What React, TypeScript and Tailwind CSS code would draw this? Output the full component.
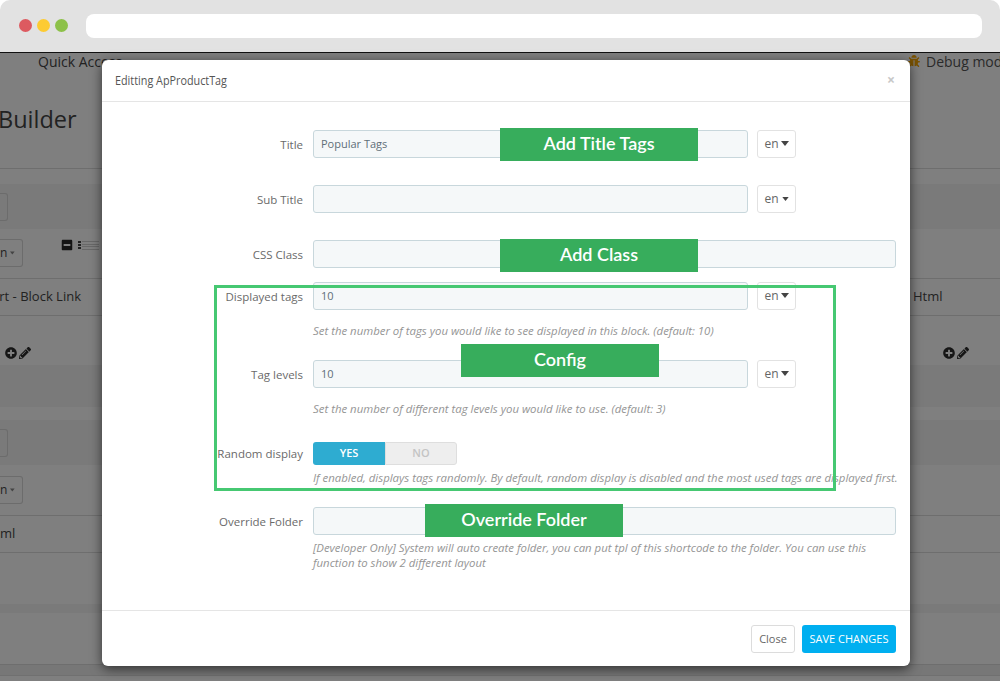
import React from 'react';
import { FaBug, FaMinusSquare, FaPencilAlt, FaPlusCircle } from 'react-icons/fa';

const Caret = ({ big = false }: { big?: boolean }) => (
  <svg width={big ? 8 : 7} height={big ? 5 : 4} viewBox="0 0 8 5" className={big ? 'mb-[2px] ml-[2px]' : 'ml-[3px]'}>
    <path d="M0 0h8L4 5z" fill="#444" />
  </svg>
);

const LangButton = ({ big = false }: { big?: boolean }) => (
  <button className="ml-[9px] flex h-[28px] w-[39px] shrink-0 items-center justify-center rounded-[3px] border border-[#e2e2e2] bg-white text-[12px] text-[#666]">
    en
    <Caret big={big} />
  </button>
);

const Field = ({
  label,
  value,
  wide = false,
  lang,
  className = '',
}: {
  label: string;
  value?: string;
  wide?: boolean;
  lang?: 'big' | 'small';
  className?: string;
}) => (
  <div className={`flex items-center ${className}`}>
    <label className="w-[201px] shrink-0 pt-[1px] text-right text-[11.5px] text-[#6a6a6a]">{label}</label>
    <div className="ml-[10px] flex">
      <div
        className={`flex h-[28px] items-center rounded-[3px] border border-[#c8d7dc] bg-[#f5f8f9] pl-[7px] text-[11px] text-[#5f6f78] ${
          wide ? 'w-[583px]' : 'w-[435px]'
        }`}
      >
        {value}
      </div>
      {lang && <LangButton big={lang === 'big'} />}
    </div>
  </div>
);

const Help = ({ children, className = '' }: { children: React.ReactNode; className?: string }) => (
  <p className={`ml-[211px] text-[11.4px] italic leading-[15px] text-[#959595] ${className}`}>{children}</p>
);

const Note = ({ text, className }: { text: string; className: string }) => (
  <div
    className={`absolute flex h-[33px] w-[198px] items-center justify-center bg-[#37ad5c] pb-[2px] text-[18px] font-semibold text-white [font-family:Lato,sans-serif] ${className}`}
  >
    {text}
  </div>
);

const PageButton = ({ wide = false }: { wide?: boolean }) => (
  <div className={`flex h-[28px] items-center justify-end rounded-r-[3px] border border-l-0 border-[#6c6c6c] pr-[7px] text-[12px] text-[#222] ${wide ? 'w-[23px]' : 'w-[6px]'}`}>
    {wide && (
      <>
        n
        <Caret />
      </>
    )}
  </div>
);

const RowIcons = () => (
  <div className="flex items-center gap-[2px] text-[12px] text-[#161616]">
    <FaPlusCircle />
    <FaPencilAlt />
  </div>
);

export default function App() {
  return (
    <div className="relative h-[681px] w-[1000px] overflow-hidden bg-white text-[#222] [font-family:'Open_Sans',sans-serif]">
      {/* browser bar */}
      <div className="flex h-[53px] items-center rounded-t-[10px] border-b border-[#111] bg-[#e2e2e2] pb-[1px] pl-[19px] pr-[18px]">
        <div className="flex gap-[5px]">
          <span className="h-[13px] w-[13px] rounded-full bg-[#dd5a60]" />
          <span className="h-[13px] w-[13px] rounded-full bg-[#fdcb32]" />
          <span className="h-[13px] w-[13px] rounded-full bg-[#8dc149]" />
        </div>
        <div className="ml-[18px] h-[24px] flex-1 rounded-[8px] bg-white" />
      </div>

      {/* page behind the dialog */}
      <div className="flex h-[628px] flex-col bg-[#7f7f7f]">
        <div className="h-[116px] border-b border-[#6e6e6e]">
          <div className="flex h-[16px] items-center justify-between pl-[38px] text-[14px]">
            <span>Quick Access</span>
            <span className="flex w-[92px] items-center gap-[6px] whitespace-nowrap text-[#2a2a2a]">
              <FaBug className="shrink-0 text-[12px] text-[#7a5200]" />
              <span>Debug mod</span>
            </span>
          </div>
          <div className="-ml-[2px] mt-[32px] text-[23.5px] leading-[36px]">Builder</div>
        </div>
        <div className="h-[15px]" />
        <div className="flex h-[45px] items-center bg-[#7a7a7a] pt-[1px]">
          <PageButton />
        </div>
        <div className="flex h-[50px] items-start border-b border-[#6e6e6e] pt-[10px]">
          <PageButton wide />
          <div className="ml-[38px] flex items-center gap-[5px]">
            <FaMinusSquare className="text-[12px] text-[#141414]" />
            <svg width="21" height="9" viewBox="0 0 21 9">
              <path d="M0 1h3M0 4h3M0 7h3" stroke="#222" strokeWidth="2" />
              <path d="M4 .5h17M4 3.5h17M4 5.5h17M4 8.5h17" stroke="#686868" />
            </svg>
          </div>
        </div>
        <div className="flex h-[37px] items-center justify-between border-b border-[#6e6e6e] text-[13px]">
          <div className="flex w-[81px] justify-end whitespace-nowrap">rt - Block Link</div>
          <div className="w-[87px] whitespace-nowrap">Html</div>
        </div>
        <div className="flex h-[49px] items-center justify-between pl-[5px] pr-[31px] pt-[25px]">
          <RowIcons />
          <RowIcons />
        </div>
        <div className="h-[42px] bg-[#7a7a7a]" />
        <div className="h-[13px]" />
        <div className="flex h-[45px] items-center bg-[#7a7a7a]">
          <PageButton />
        </div>
        <div className="flex h-[51px] items-start border-b border-[#6e6e6e] pt-[11px]">
          <PageButton wide />
        </div>
        <div className="flex h-[37px] items-center border-b border-[#6e6e6e] text-[13px]">
          <div className="w-[15px] whitespace-nowrap text-right">ml</div>
        </div>
        <div className="h-[51px]" />
        <div className="h-[9px] bg-[#7a7a7a]" />
        <div className="h-[52px] border-b border-[#6e6e6e]" />
        <div className="h-[11px] border-b border-[#707070] bg-[#777]" />
      </div>

      {/* dialog */}
      <div className="absolute left-[102px] top-[60px] flex h-[606px] w-[808px] flex-col rounded-[6px] bg-white shadow-[0_3px_12px_rgba(0,0,0,0.6)]">
        <div className="flex h-[42px] items-center justify-between border-b border-[#e5e5e5] pl-[13px] pr-[15px]">
          <h4 className="origin-left scale-x-90 text-[12px] font-medium text-[#555]">Editting ApProductTag</h4>
          <span className="pb-[1px] text-[14px] font-bold leading-none text-[#c8c8c8]">×</span>
        </div>
        <div className="flex-1 pt-[28px]">
          <Field label="Title" value="Popular Tags" lang="big" />
          <Field label="Sub Title" lang="small" className="mt-[27px]" />
          <Field label="CSS Class" wide className="mt-[27px]" />
          <Field label="Displayed tags" value="10" lang="big" className="mt-[14px]" />
          <Help className="mt-[13px]">Set the number of tags you would like to see displayed in this block. (default: 10)</Help>
          <Field label="Tag levels" value="10" lang="big" className="mt-[22px]" />
          <Help className="mt-[13px]">Set the number of different tag levels you would like to use. (default: 3)</Help>
          <div className="mt-[26px] flex items-center">
            <label className="w-[201px] shrink-0 text-right text-[11.5px] text-[#6a6a6a]">Random display</label>
            <div className="ml-[10px] flex h-[23px] w-[144px] text-[11px] font-semibold">
              <span className="flex w-[72px] items-center justify-center rounded-l-[3px] bg-[#2eacd1] text-white">YES</span>
              <span className="flex w-[72px] items-center justify-center rounded-r-[3px] border border-[#dedede] bg-[#eeeeee] text-[#c4c4c4]">NO</span>
            </div>
          </div>
          <Help className="mt-[5px] whitespace-nowrap">
            If enabled, displays tags randomly. By default, random display is disabled and the most used tags are displayed first.
          </Help>
          <Field label="Override Folder" wide className="mt-[22px]" />
          <Help className="mt-[5px] w-[583px]">
            [Developer Only] System will auto create folder, you can put tpl of this shortcode to the folder. You can use this function to show 2 different layout
          </Help>
        </div>
        <div className="flex h-[56px] items-center justify-end gap-[7px] border-t border-[#e5e5e5] pr-[14px]">
          <button className="h-[28px] w-[44px] rounded-[3px] border border-[#dcdcdc] bg-white pt-[1px] text-[11px] text-[#666]">Close</button>
          <button className="h-[28px] w-[94px] rounded-[3px] bg-[#00aff0] pt-[1px] text-[11px] font-medium text-white">SAVE CHANGES</button>
        </div>
      </div>

      {/* annotations */}
      <div className="absolute left-[214px] top-[285px] h-[206px] w-[622px] border-[3px] border-[#46c872]" />
      <Note text="Add Title Tags" className="left-[500px] top-[128px]" />
      <Note text="Add Class" className="left-[500px] top-[239px]" />
      <Note text="Config" className="left-[461px] top-[344px]" />
      <Note text="Override Folder" className="left-[425px] top-[504px]" />
    </div>
  );
}
